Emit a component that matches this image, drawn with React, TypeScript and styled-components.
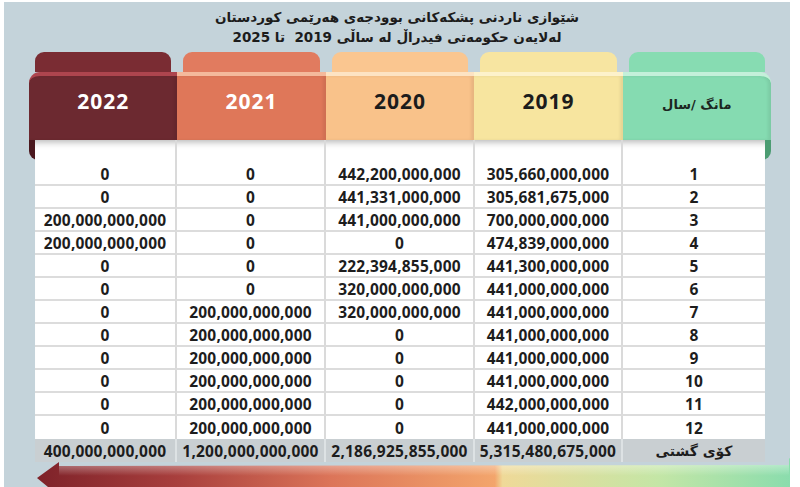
import styled, { createGlobalStyle } from 'styled-components';

const GlobalStyle = createGlobalStyle`
  html, body {
    margin: 0;
    padding: 0;
    background: #ffffff;
    overflow: hidden;
  }
`;

type Tone = {
  back: string;
  front: string;
  rim: string;
  text: string;
  curl?: string;
};

const tones: Record<string, Tone> = {
  y2022: { back: '#7a2c33', front: '#6c2930', rim: '#ad454e', text: '#ffffff', curl: '#4a181e' },
  y2021: { back: '#e17b5f', front: '#df7759', rim: '#f4b99c', text: '#ffffff' },
  y2020: { back: '#fac690', front: '#f9c28a', rim: '#fde3c3', text: '#1c1c1c' },
  y2019: { back: '#f7e5a1', front: '#f7e59f', rim: '#fdf2cb', text: '#1c1c1c' },
  month: { back: '#87dcb2', front: '#85dbb1', rim: '#c4f0da', text: '#1c2621', curl: '#4c9c72' },
};

const Frame = styled.div`
  width: 786px;
  height: 485px;
  margin: 2px 0 0 4px;
  background: #c4d3da;
  overflow: hidden;
`;

const Title = styled.h1`
  margin: 0;
  height: 45px;
  padding-top: 5px;
  box-sizing: border-box;
  direction: rtl;
  text-align: center;
  font-family: "DejaVu Sans", sans-serif;
  font-size: 13.5px;
  font-weight: 700;
  line-height: 20px;
  color: #1c1c1c;
`;

const Board = styled.div`
  width: 742px;
  margin: 5px 0 0 25px;
`;

const BackTabs = styled.div`
  display: grid;
  grid-template-columns: repeat(5, 1fr);
  height: 20px;
`;

const BackTab = styled.div<{ $tone: Tone }>`
  margin: 0 6px;
  border-radius: 9px 9px 0 0;
  background: ${(p) => p.$tone.back};
`;

const FrontTabs = styled.div`
  display: grid;
  grid-template-columns: repeat(5, 1fr);
  height: 68px;
`;

const FrontTab = styled.div<{ $tone: Tone; $edge?: 'left' | 'right' }>`
  position: relative;
  box-sizing: border-box;
  padding-top: 10px;
  border-top: 4px solid ${(p) => p.$tone.rim};
  background: ${(p) => p.$tone.front};
  box-shadow: inset -3px 0 3px rgba(0, 0, 0, 0.07);
  color: ${(p) => p.$tone.text};
  text-align: center;
  font-family: "Open Sans", sans-serif;
  font-size: 21px;
  font-weight: 700;
  letter-spacing: 1px;
  line-height: 30px;
  border-top-left-radius: ${(p) => (p.$edge === 'left' ? '11px' : '0')};
  border-top-right-radius: ${(p) => (p.$edge === 'right' ? '11px' : '0')};

  ${(p) =>
    p.$edge &&
    `
    &::after {
      content: '';
      position: absolute;
      top: 100%;
      ${p.$edge}: 0;
      width: 14px;
      height: 20px;
      background: ${p.$tone.curl};
      border-radius: ${p.$edge === 'left' ? '0 0 0 9px' : '0 0 9px 0'};
    }
  `}
`;

const MonthHead = styled.span`
  display: inline-block;
  direction: rtl;
  font-family: "DejaVu Sans", sans-serif;
  font-size: 13px;
  letter-spacing: 0;
`;

const Sheet = styled.div`
  position: relative;
  z-index: 1;
  margin: 0 6px;
  display: grid;
  grid-template-columns: 140px 149px 149px 148px 1fr;
  grid-auto-rows: 23px;
  background: #ffffff;
  box-shadow: inset 0 9px 7px -7px rgba(0, 0, 0, 0.3);
  font-family: "Open Sans", sans-serif;
  font-size: 15.5px;
  font-weight: 700;
  letter-spacing: 0.2px;
  color: #1d1d1d;
`;

const Cell = styled.div<{ $first?: boolean; $line?: boolean; $total?: boolean }>`
  display: flex;
  align-items: center;
  justify-content: center;
  box-sizing: border-box;
  white-space: nowrap;
  border-left: ${(p) => (p.$first ? 'none' : `2px solid ${p.$total ? '#dde2e4' : '#dadada'}`)};
  border-bottom: ${(p) => (p.$line ? '2px solid #dcdcdc' : 'none')};
  background: ${(p) => (p.$total ? '#c9cfd2' : 'transparent')};
`;

const Label = styled.span`
  direction: rtl;
  font-family: "DejaVu Sans", sans-serif;
  font-size: 14px;
  font-weight: 700;
  letter-spacing: 0;
`;

const ArrowSvg = styled.svg`
  display: block;
  overflow: visible;
`;

// rows: month, 2019, 2020, 2021, 2022
const rows: string[][] = [
  ['1', '305,660,000,000', '442,200,000,000', '0', '0'],
  ['2', '305,681,675,000', '441,331,000,000', '0', '0'],
  ['3', '700,000,000,000', '441,000,000,000', '0', '200,000,000,000'],
  ['4', '474,839,000,000', '0', '0', '200,000,000,000'],
  ['5', '441,300,000,000', '222,394,855,000', '0', '0'],
  ['6', '441,000,000,000', '320,000,000,000', '0', '0'],
  ['7', '441,000,000,000', '320,000,000,000', '200,000,000,000', '0'],
  ['8', '441,000,000,000', '0', '200,000,000,000', '0'],
  ['9', '441,000,000,000', '0', '200,000,000,000', '0'],
  ['10', '441,000,000,000', '0', '200,000,000,000', '0'],
  ['11', '442,000,000,000', '0', '200,000,000,000', '0'],
  ['12', '441,000,000,000', '0', '200,000,000,000', '0'],
];

const totals = ['5,315,480,675,000', '2,186,925,855,000', '1,200,000,000,000', '400,000,000,000'];

const columns = [tones.y2022, tones.y2021, tones.y2020, tones.y2019, tones.month];
const years = ['2022', '2021', '2020', '2019'];

const Arrow = () => (
  <ArrowSvg width="786" height="25" viewBox="0 0 786 25">
    <defs>
      <linearGradient id="band" x1="0" y1="0" x2="1" y2="0">
        <stop offset="0" stopColor="#7e2229" />
        <stop offset="0.18" stopColor="#a83f3d" />
        <stop offset="0.38" stopColor="#dc7559" />
        <stop offset="0.59" stopColor="#f3a56c" />
        <stop offset="0.6" stopColor="#efd998" />
        <stop offset="0.8" stopColor="#c4e6a6" />
        <stop offset="1" stopColor="#80dbae" />
      </linearGradient>
      <linearGradient id="shine" x1="0" y1="0" x2="0" y2="1">
        <stop offset="0" stopColor="#ffffff" stopOpacity="0.35" />
        <stop offset="0.4" stopColor="#ffffff" stopOpacity="0" />
      </linearGradient>
    </defs>
    <polygon
      points="8,16 30,0 30,4 760,3 760,-4 784,11 760,32 760,30 30,30 30,34"
      fill="url(#band)"
    />
    <polygon points="30,4 760,3 760,30 30,30" fill="url(#shine)" />
  </ArrowSvg>
);

export default function App() {
  return (
    <>
      <GlobalStyle />
      <Frame>
        <Title>
          شێوازی ناردنی پشکەکانی بوودجەی هەرێمی کوردستان
          <br />
          لەلایەن حکومەتی فیدراڵ لە ساڵی 2019&nbsp; تا 2025
        </Title>
        <Board>
          <BackTabs>
            {columns.map((tone, i) => (
              <BackTab key={i} $tone={tone} />
            ))}
          </BackTabs>
          <FrontTabs>
            {years.map((year, i) => (
              <FrontTab key={year} $tone={columns[i]} $edge={i === 0 ? 'left' : undefined}>
                {year}
              </FrontTab>
            ))}
            <FrontTab $tone={tones.month} $edge="right">
              <MonthHead>مانگ /سال</MonthHead>
            </FrontTab>
          </FrontTabs>
          <Sheet>
            {[0, 1, 2, 3, 4].map((c) => (
              <Cell key={`e${c}`} $first={c === 0} />
            ))}
            {rows.map((row, r) => {
              const line = r < rows.length - 1;
              return [row[4], row[3], row[2], row[1], row[0]].map((value, c) => (
                <Cell key={`${r}-${c}`} $first={c === 0} $line={line}>
                  {value}
                </Cell>
              ));
            })}
            {[totals[3], totals[2], totals[1], totals[0]].map((value, c) => (
              <Cell key={`t${c}`} $first={c === 0} $total>
                {value}
              </Cell>
            ))}
            <Cell $total>
              <Label>کۆی گشتی</Label>
            </Cell>
          </Sheet>
          <Arrow />
        </Board>
      </Frame>
    </>
  );
}
